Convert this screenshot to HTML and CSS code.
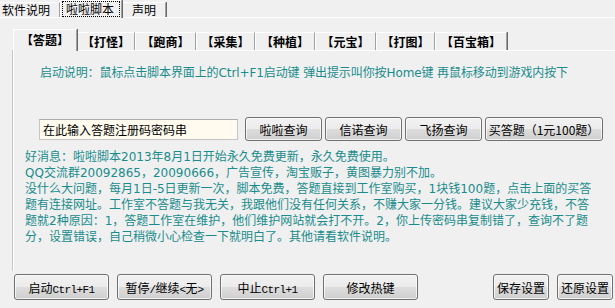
FILE: index.html
```html
<!DOCTYPE html>
<html lang="zh">
<head>
<meta charset="utf-8">
<link rel="stylesheet" href="styles.css">
</head>
<body>
<div class="top-tabs">
  <div class="ttab first">软件说明</div>
  <div class="ttab active"><span class="focus">啦啦脚本</span></div>
  <div class="ttab">声明</div>
</div>
<div class="outer">
  <div class="inner-tabs">
    <div class="itab active">【答题】</div>
    <div class="itab w58">【打怪】</div>
    <div class="itab w61">【跑商】</div>
    <div class="itab w59">【采集】</div>
    <div class="itab w60">【种植】</div>
    <div class="itab w61">【元宝】</div>
    <div class="itab w59">【打图】</div>
    <div class="itab w72">【百宝箱】</div>
  </div>
  <div class="inner-panel">
    <p class="launch">启动说明：鼠标点击脚本界面上的Ctrl+F1启动键 弹出提示叫你按Home键 再鼠标移动到游戏内按下</p>
    <div class="query-row">
      <div class="input">在此输入答题注册码密码串</div>
      <button class="btn q">啦啦查询</button>
      <button class="btn q">信诺查询</button>
      <button class="btn q">飞扬查询</button>
      <button class="btn buy">买答题（1元100题）</button>
    </div>
    <p class="news">好消息：啦啦脚本2013年8月1日开始永久免费更新，永久免费使用。<br>QQ交流群20092865，20090666，广告宣传，淘宝贩子，黄图暴力别不加。<br>没什么大问题，每月1日-5日更新一次，脚本免费，答题直接到工作室购买，1块钱100题，点击上面的买答<br>题有连接网址。工作室不答题与我无关，我跟他们没有任何关系，不赚大家一分钱。建议大家少充钱，不答<br>题就2种原因：1，答题工作室在维护，他们维护网站就会打不开。2，你上传密码串复制错了，查询不了题<br>分，设置错误，自己稍微小心检查一下就明白了。其他请看软件说明。</p>
  </div>
  <div class="bottom-row">
    <button class="btn big">启动<span class="mono">Ctrl+F1</span></button>
    <button class="btn big">暂停<span class="mono">/</span>继续<span class="mono">&lt;</span>无<span class="mono">&gt;</span></button>
    <button class="btn big">中止<span class="mono">Ctrl+1</span></button>
    <button class="btn big">修改热键</button>
    <button class="btn small save">保存设置</button>
    <button class="btn small">还原设置</button>
  </div>
</div>
</body>
</html>
```

FILE: styles.css
```css
* { box-sizing: border-box; }
html, body { margin: 0; padding: 0; }
body {
  width: 615px;
  height: 308px;
  overflow: hidden;
  background: #f0f0f0;
  color: #000;
  font-family: "Noto Sans CJK SC", sans-serif;
  font-size: 12px;
  line-height: 16px;
}

/* top tab strip */
.top-tabs {
  display: flex;
  align-items: flex-end;
  height: 17px;
}
.ttab {
  height: 15px;
  line-height: 14px;
  background: #f0f0f0;
  border-top: 1px solid #fff;
  border-left: 1px solid #fff;
  border-right: 1px solid #a0a0a0;
  box-shadow: 1px 0 0 #696969;
  padding: 0 9px 0 9px;
  margin-right: 1px;
}
.ttab.first {
  width: 60px;
  padding-left: 2px;
  border-left: none;
  margin-right: 0;
}
.ttab.active {
  height: 18px;
  width: 62px;
  margin-bottom: -1px;
  margin-left: 0;
  margin-right: 0;
  padding: 1px 2px 0 2px;
  position: relative;
  z-index: 1;
}
.focus {
  display: block;
  outline: 1px dotted #000;
  outline-offset: 0;
  padding: 0 3px;
  line-height: 14px;
}

.outer {
  border-top: 1px solid #fff;
}

/* inner tab strip */
.inner-tabs {
  display: flex;
  align-items: flex-end;
  height: 21px;
  margin: 11px 0 0 13px;
}
.itab {
  height: 18px;
  line-height: 17px;
  font-weight: bold;
  text-align: center;
  background: #f0f0f0;
  border-top: 1px solid #fff;
  border-left: 1px solid #fff;
  border-right: 1px solid #a0a0a0;
  box-shadow: 1px 0 0 #696969;
}
.itab.active {
  width: 64px;
  height: 22px;
  margin-bottom: -1px;
  line-height: 19px;
  position: relative;
  z-index: 1;
}
.w58 { width: 58px; }
.w59 { width: 59px; }
.w60 { width: 60px; }
.w61 { width: 61px; }
.w72 { width: 72px; }

.inner-panel {
  margin-left: 13px;
  height: 221px;
  border-top: 1px solid #fff;
  border-left: 1px solid #fff;
  box-shadow: -1px 0 0 #c8c8c8;
  padding-top: 14px;
}
.launch {
  margin: 0 0 0 26px;
  color: #1a8c8c;
  font-family: "DejaVu Sans", "Noto Sans CJK SC", sans-serif;
  white-space: nowrap;
  letter-spacing: -0.1px;
}
.query-row {
  display: flex;
  align-items: center;
  gap: 3px;
  margin: 36px 0 0 25px;
  height: 24px;
}
.input {
  width: 199px;
  height: 21px;
  line-height: 19px;
  margin-right: 4px;
  padding-left: 3px;
  background: #fffbee;
  border: 1px solid #c5c5c5;
  border-top-color: #abadb3;
}
.btn {
  font-family: "Noto Sans CJK SC", sans-serif;
  font-size: 12px;
  color: #000;
  height: 24px;
  padding: 0;
  border: 1px solid #707070;
  border-radius: 3px;
  background: linear-gradient(#f2f2f2 0%, #ebebeb 50%, #dddddd 51%, #cfcfcf 100%);
  box-shadow: inset 0 0 0 1px rgba(255,255,255,0.7);
}
.btn.q { width: 77px; }
.btn.buy { width: 118px; }

.news {
  margin: 8px 0 0 11px;
  color: #1a8c8c;
  font-family: "DejaVu Sans", "Noto Sans CJK SC", sans-serif;
  white-space: nowrap;
}

.bottom-row {
  display: flex;
  gap: 8px;
  margin-top: 3px;
  padding: 0 2px 0 14px;
}
.btn.big { width: 95px; height: 26px; }
.btn.small { width: 56px; height: 26px; }
.btn.save { margin-left: auto; }
.mono {
  font-family: "Liberation Mono", monospace;
  font-size: 11px;
  letter-spacing: -0.6px;
}
```
